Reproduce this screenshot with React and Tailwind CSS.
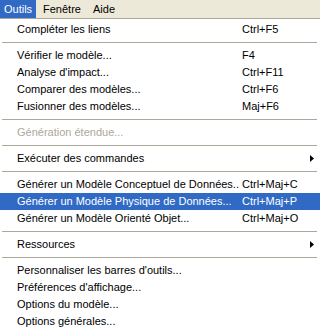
const items = [
  { label: "Compléter les liens", key: "Ctrl+F5" },
  { sep: true },
  { label: "Vérifier le modèle...", key: "F4" },
  { label: "Analyse d'impact...", key: "Ctrl+F11" },
  { label: "Comparer des modèles...", key: "Ctrl+F6" },
  { label: "Fusionner des modèles...", key: "Maj+F6" },
  { sep: true },
  { label: "Génération étendue...", disabled: true },
  { sep: true },
  { label: "Exécuter des commandes", sub: true },
  { sep: true },
  { label: "Générer un Modèle Conceptuel de Données..", key: "Ctrl+Maj+C" },
  { label: "Générer un Modèle Physique de Données...", key: "Ctrl+Maj+P", active: true },
  { label: "Générer un Modèle Orienté Objet...", key: "Ctrl+Maj+O" },
  { sep: true },
  { label: "Ressources", sub: true },
  { sep: true },
  { label: "Personnaliser les barres d'outils..." },
  { label: "Préférences d'affichage..." },
  { label: "Options du modèle..." },
  { label: "Options générales..." },
];

function Arrow() {
  return (
    <svg width="4" height="7" viewBox="0 0 4 7" className="block">
      <polygon points="0,0 4,3.5 0,7" fill="currentColor" />
    </svg>
  );
}

function MenuItem({ item }) {
  if (item.sep) {
    return (
      <div className="h-[9px] flex items-center">
        <div className="h-px ml-[2px] mr-[3px] flex-1 bg-[#aca899]" />
      </div>
    );
  }
  const color = item.active
    ? "bg-[#316ac5] text-white"
    : item.disabled
    ? "text-[#aca899]"
    : "text-black";
  return (
    <div className={`h-[17px] flex items-center leading-[17px] ${color}`}>
      <span className="w-[242px] pl-[17px] whitespace-nowrap overflow-hidden">{item.label}</span>
      <span className="flex-1 whitespace-nowrap">{item.key}</span>
      {item.sub && (
        <span className="mr-[6px]">
          <Arrow />
        </span>
      )}
    </div>
  );
}

export default function App() {
  return (
    <div
      className="w-[320px] h-[332px] overflow-hidden bg-white text-[11px]"
      style={{ fontFamily: '"Liberation Sans", Arial, sans-serif' }}
    >
      <div className="h-[18px] flex bg-[#ece9d8] leading-[18px]">
        <div className="w-[36px] pl-[4px] bg-[#316ac5] text-white">Outils</div>
        <div className="w-[52px] pl-[7px] text-black">Fenêtre</div>
        <div className="pl-[5px] text-black">Aide</div>
      </div>
      <div className="h-px bg-[#aca899]" />
      <div className="pt-[2px]">
        {items.map((item, i) => (
          <MenuItem key={i} item={item} />
        ))}
      </div>
    </div>
  );
}
